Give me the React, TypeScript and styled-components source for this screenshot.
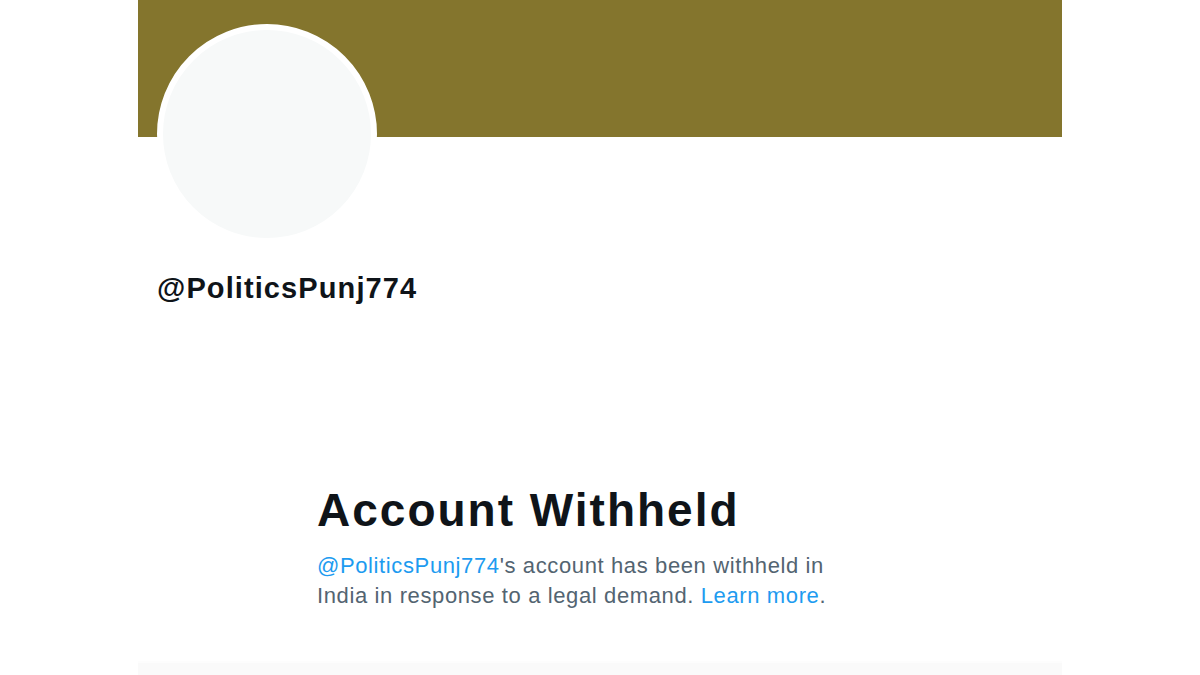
import React from "react";
import styled, { createGlobalStyle } from "styled-components";

const GlobalStyle = createGlobalStyle`
  html, body {
    margin: 0;
    padding: 0;
    background: #ffffff;
    font-family: "Liberation Sans", Arial, sans-serif;
    overflow: hidden;
  }
`;

const Page = styled.div`
  width: 100%;
  display: flex;
  justify-content: center;
`;

const Column = styled.main`
  width: 924px;
  display: flex;
  flex-direction: column;
  background: #ffffff;
`;

const Banner = styled.div`
  height: 137px;
  background: #84752d;
`;

const ProfileHeader = styled.section`
  display: flex;
  flex-direction: column;
  align-items: flex-start;
  padding: 0 19px;
`;

const Avatar = styled.div`
  width: 208px;
  height: 208px;
  margin-top: -113px;
  border: 6px solid #ffffff;
  border-radius: 50%;
  background: #f7f9f9;
`;

const Handle = styled.h2`
  margin: 27px 0 0;
  font-size: 29px;
  line-height: 34px;
  font-weight: 700;
  letter-spacing: 1.1px;
  color: #0f1419;
`;

const EmptyState = styled.section`
  display: flex;
  flex-direction: column;
  padding-left: 179px;
  margin-top: 178px;
`;

const Title = styled.h1`
  margin: 0;
  font-size: 46px;
  line-height: 54px;
  font-weight: 700;
  letter-spacing: 2px;
  color: #0f1419;
`;

const Message = styled.p`
  margin: 14px 0 0;
  max-width: 530px;
  font-size: 22px;
  line-height: 30px;
  letter-spacing: 0.62px;
  color: #536471;
`;

const Link = styled.a`
  color: #1d9bf0;
  text-decoration: none;
`;

const NextSection = styled.div`
  margin-top: 50px;
  height: 40px;
  border-top: 2px solid #fdfdfd;
  background: #fafafa;
`;

export default function App() {
  return (
    <>
      <GlobalStyle />
      <Page>
        <Column>
          <Banner />
          <ProfileHeader>
            <Avatar />
            <Handle>@PoliticsPunj774</Handle>
          </ProfileHeader>
          <EmptyState>
            <Title>Account Withheld</Title>
            <Message>
              <Link href="#">@PoliticsPunj774</Link>'s account has been withheld in India in
              response to a legal demand. <Link href="#">Learn more</Link>.
            </Message>
          </EmptyState>
          <NextSection />
        </Column>
      </Page>
    </>
  );
}
